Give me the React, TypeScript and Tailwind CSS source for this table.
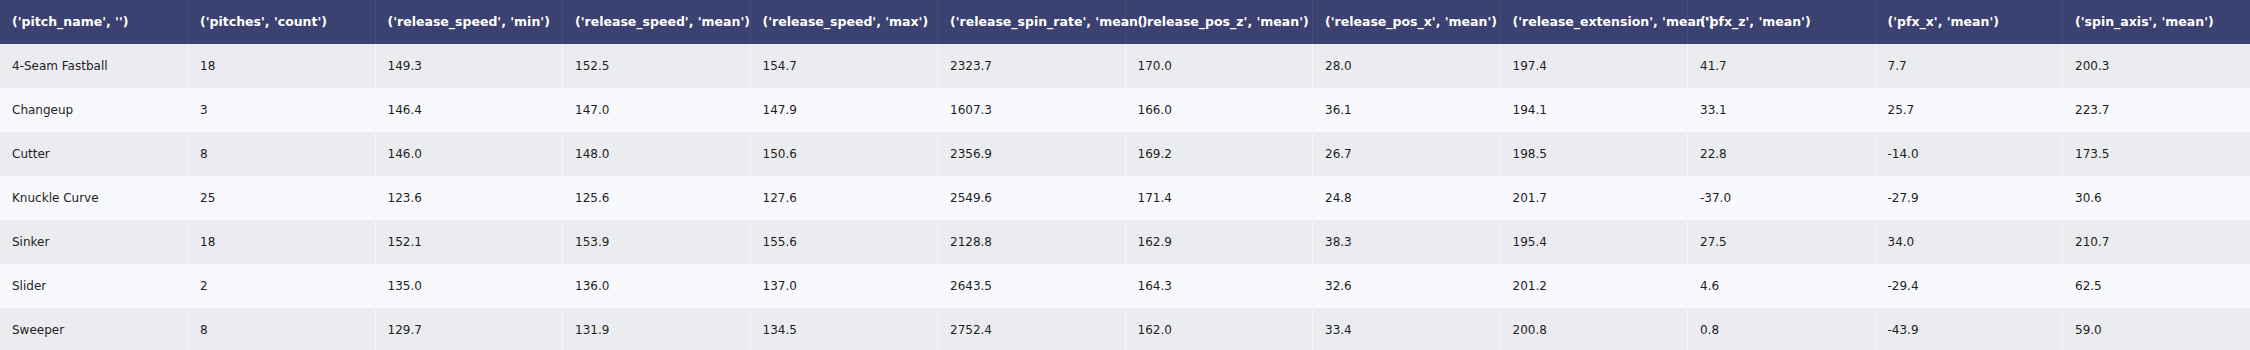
const columns = [
  "('pitch_name', '')",
  "('pitches', 'count')",
  "('release_speed', 'min')",
  "('release_speed', 'mean')",
  "('release_speed', 'max')",
  "('release_spin_rate', 'mean')",
  "('release_pos_z', 'mean')",
  "('release_pos_x', 'mean')",
  "('release_extension', 'mean')",
  "('pfx_z', 'mean')",
  "('pfx_x', 'mean')",
  "('spin_axis', 'mean')",
]

const rows = [
  ["4-Seam Fastball", "18", "149.3", "152.5", "154.7", "2323.7", "170.0", "28.0", "197.4", "41.7", "7.7", "200.3"],
  ["Changeup", "3", "146.4", "147.0", "147.9", "1607.3", "166.0", "36.1", "194.1", "33.1", "25.7", "223.7"],
  ["Cutter", "8", "146.0", "148.0", "150.6", "2356.9", "169.2", "26.7", "198.5", "22.8", "-14.0", "173.5"],
  ["Knuckle Curve", "25", "123.6", "125.6", "127.6", "2549.6", "171.4", "24.8", "201.7", "-37.0", "-27.9", "30.6"],
  ["Sinker", "18", "152.1", "153.9", "155.6", "2128.8", "162.9", "38.3", "195.4", "27.5", "34.0", "210.7"],
  ["Slider", "2", "135.0", "136.0", "137.0", "2643.5", "164.3", "32.6", "201.2", "4.6", "-29.4", "62.5"],
  ["Sweeper", "8", "129.7", "131.9", "134.5", "2752.4", "162.0", "33.4", "200.8", "0.8", "-43.9", "59.0"],
]

export default function App() {
  return (
    <div className="w-[2250px] h-[350px] overflow-hidden bg-white font-['DejaVu_Sans',sans-serif] text-[12px]">
      <table className="w-full table-fixed border-collapse">
        <thead>
          <tr className="bg-[#3b4170]">
            {columns.map((col, i) => (
              <th
                key={i}
                className="h-[44px] px-3 text-left text-[12.5px] font-bold text-white whitespace-nowrap border-r border-[#474d7b] last:border-r-0"
              >
                {col}
              </th>
            ))}
          </tr>
        </thead>
        <tbody>
          {rows.map((row, r) => (
            <tr key={r} className={r % 2 === 0 ? "bg-[#ebecef]" : "bg-[#f8f9fc]"}>
              {row.map((cell, c) => (
                <td
                  key={c}
                  className="h-[44px] px-3 text-[#1e1e1e] whitespace-nowrap border-r border-[#f6f7f9] last:border-r-0"
                >
                  {cell}
                </td>
              ))}
            </tr>
          ))}
        </tbody>
      </table>
    </div>
  )
}
